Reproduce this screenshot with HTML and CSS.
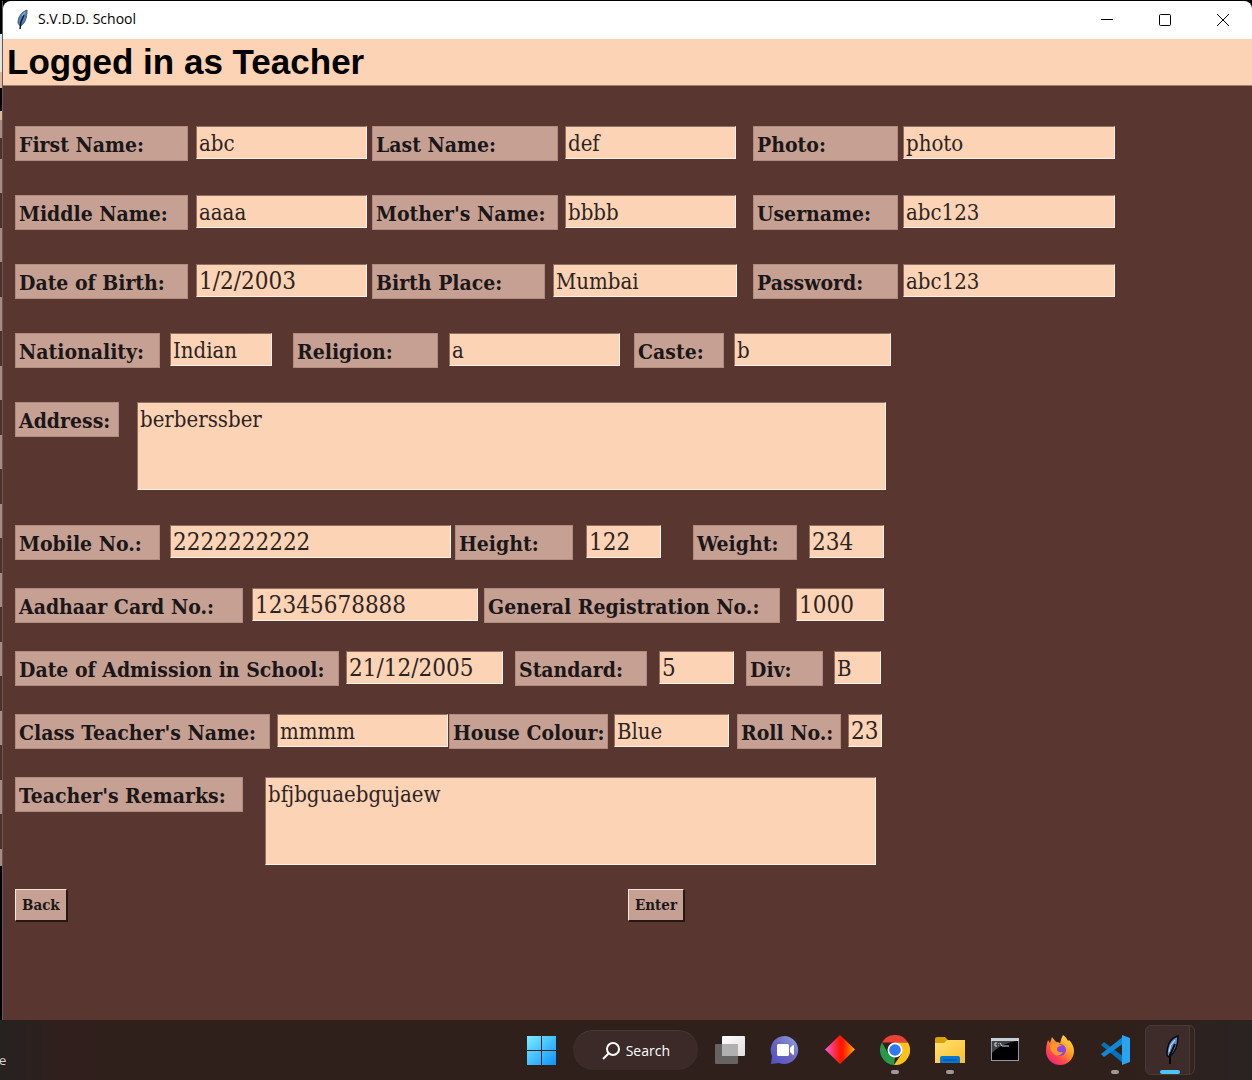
FILE: index.html
```html
<!DOCTYPE html>
<html lang="en">
<head>
<meta charset="utf-8">
<meta name="viewport" content="width=device-width, initial-scale=1">
<title>S.V.D.D. School</title>
<link rel="stylesheet" href="styles.css">
</head>
<body>
<div class="desktop">
  <div class="behind"></div>
  <main class="window">
    <header class="titlebar">
      <svg class="feather" viewBox="0 0 16 22" aria-hidden="true"><path d="M12 1C7 3 3 7 3 14l2 3c5-2 7-8 7-16z" fill="#4d86c4" stroke="#4a545c"/><path d="M9 6 6 13l-1 7" fill="none" stroke="#111820" stroke-width="1.500"/><path d="M10 3 7 7" stroke="#8fc0ea"/></svg>
      <span class="title">S.V.D.D. School</span>
      <button class="control" aria-label="Minimize"><svg viewBox="0 0 14 14"><path d="M1 6.500h12"/></svg></button>
      <button class="control" aria-label="Maximize"><svg viewBox="0 0 14 14"><rect x="1.500" y="1.500" width="11" height="11" rx="1"/></svg></button>
      <button class="control" aria-label="Close"><svg viewBox="0 0 14 14"><path d="m1 1 12 12M13 1 1 13"/></svg></button>
    </header>
    <h1 class="banner">Logged in as Teacher</h1>
    <form class="form">
      <section class="group personal">
        <div class="row names">
          <label for="first">First Name:</label><input id="first" value="abc">
          <label for="last">Last Name:</label><input id="last" value="def">
          <label for="photo">Photo:</label><input id="photo" value="photo">
        </div>
        <div class="row names">
          <label for="middle">Middle Name:</label><input id="middle" value="aaaa">
          <label for="mother">Mother's Name:</label><input id="mother" value="bbbb">
          <label for="user">Username:</label><input id="user" value="abc123">
        </div>
        <div class="row birth">
          <label for="dob">Date of Birth:</label><input id="dob" class="numeric" value="1/2/2003">
          <label for="place">Birth Place:</label><input id="place" value="Mumbai">
          <label for="pass">Password:</label><input id="pass" value="abc123">
        </div>
        <div class="row origin">
          <label for="nation">Nationality:</label><input id="nation" value="Indian">
          <label for="religion">Religion:</label><input id="religion" value="a">
          <label for="caste">Caste:</label><input id="caste" value="b">
        </div>
        <div class="row address">
          <label for="address">Address:</label><textarea id="address">berberssber</textarea>
        </div>
      </section>
      <section class="group school">
        <div class="row body">
          <label for="mobile">Mobile No.:</label><input id="mobile" class="numeric" value="2222222222">
          <label for="height">Height:</label><input id="height" class="numeric" value="122">
          <label for="weight">Weight:</label><input id="weight" class="numeric" value="234">
        </div>
        <div class="row numbers">
          <label for="aadhaar">Aadhaar Card No.:</label><input id="aadhaar" class="numeric" value="12345678888">
          <label for="reg">General Registration No.:</label><input id="reg" class="numeric" value="1000">
        </div>
        <div class="row admission">
          <label for="admitted">Date of Admission in School:</label><input id="admitted" class="numeric" value="21/12/2005">
          <label for="standard">Standard:</label><input id="standard" class="numeric" value="5">
          <label for="div">Div:</label><input id="div" value="B">
        </div>
        <div class="row class">
          <label for="teacher">Class Teacher's Name:</label><input id="teacher" value="mmmm">
          <label for="house">House Colour:</label><input id="house" value="Blue">
          <label for="roll">Roll No.:</label><input id="roll" class="numeric" value="23">
        </div>
        <div class="row remarks">
          <label for="remarks">Teacher's Remarks:</label><textarea id="remarks">bfjbguaebgujaew</textarea>
        </div>
      </section>
      <div class="actions">
        <button type="button" class="action">Back</button>
        <button type="submit" class="action">Enter</button>
      </div>
    </form>
  </main>
</div>
<footer class="taskbar">
  <span class="widget">e</span>
  <nav class="apps" aria-label="Taskbar">
    <button class="app" aria-label="Start"><svg viewBox="0 0 30 30"><defs><linearGradient id="win" x1="0" y1="0" x2="30" y2="30" gradientUnits="userSpaceOnUse"><stop stop-color="#7ff0ff"/><stop offset="1" stop-color="#0b93ff"/></linearGradient></defs><path fill="url(#win)" d="M1 1h14v14H1zM16 1h14v14H16zM1 16h14v14H1zM16 16h14v14H16z"/></svg></button>
    <button class="search"><svg viewBox="0 0 18 18" aria-hidden="true"><circle cx="11" cy="7" r="6"/><path d="m7 11-6 6"/></svg>Search</button>
    <button class="app" aria-label="Task View"><svg viewBox="0 0 30 30"><defs><linearGradient id="tv" x2="1" y2="1"><stop stop-color="#fff"/><stop offset="1" stop-color="#dedede"/></linearGradient></defs><rect x="0" y="9" width="23" height="20" rx="1" fill="#666463"/><rect x="7" y="1" width="23" height="20" rx="1" fill="url(#tv)"/><path d="M7 9h16v12H7z" fill="#b1b0b0"/></svg></button>
    <button class="app" aria-label="Chat"><svg viewBox="0 0 30 30"><defs><linearGradient id="chat" x1="0" y1="1" x2="1" y2="0"><stop stop-color="#4d51ca"/><stop offset=".5" stop-color="#6d66bd"/><stop offset="1" stop-color="#8ba8ea"/></linearGradient></defs><path d="M15 1a14 14 0 1 1-6 27L1 29l1-8A14 14 0 0 1 15 1z" fill="url(#chat)"/><rect x="7" y="9" width="12" height="12" rx="1.500" fill="#fff"/><path d="m20 13 3-3q1 0 1 1v8q0 1-1 1l-3-3z" fill="#fff"/></svg></button>
    <button class="app" aria-label="Diamond"><svg viewBox="0 0 30 30"><defs><linearGradient id="dia"><stop stop-color="#f25bdc"/><stop offset=".5" stop-color="#ff1800"/><stop offset=".6" stop-color="#ff1800"/><stop offset="1" stop-color="#ffb000"/></linearGradient></defs><path d="m15 0 15 14.500L15 29 0 14.500z" fill="url(#dia)"/></svg></button>
    <button class="app running" aria-label="Chrome"><svg viewBox="0 0 30 30"><path d="M2 7.500A15 15 0 0 1 28 7.500H15z" fill="#ea4335"/><path d="M2 7.500 8.500 19 15 22.500 14 30A15 15 0 0 1 2 7.500z" fill="#26994a"/><path d="M28 7.500A15 15 0 0 1 14 30l7.500-11L15 7.500z" fill="#fcc21b"/><circle cx="15" cy="15" r="7.500" fill="#fff"/><circle cx="15" cy="15" r="5.800" fill="#2f78ee"/></svg></button>
    <button class="app running" aria-label="File Explorer"><svg viewBox="0 0 30 30"><defs><linearGradient id="fold" x2="1" y2="1"><stop stop-color="#ffe276"/><stop offset="1" stop-color="#fdbd2a"/></linearGradient></defs><path d="M0 4q0-2 2-2h8l3 3v6H0z" fill="#dca000"/><path d="M0 8h9l3-3h18v23H0z" fill="url(#fold)"/><path d="M5 28v-5q0-2 2-2h16q2 0 2 2v5z" fill="#0877d3"/><path d="M8 25h14" stroke="#044d98"/></svg></button>
    <button class="app" aria-label="Command Prompt"><svg viewBox="0 0 30 30"><rect x="1.500" y="3.500" width="27" height="22" fill="#000" stroke="#8c9baa"/><path d="M1 3h28v3H1z" fill="#c5d0d9"/><path d="M2 6h26C17 7 8 12 2 18z" fill="#444"/><path d="M7 8H5v3h2M8.500 8.500v.6M8.500 10.500v.6M10 8l2 3M12 11h7" fill="none" stroke="#ddd"/></svg></button>
    <button class="app" aria-label="Firefox"><svg viewBox="0 0 30 30"><defs><linearGradient id="fox" x1="1" y1="0" x2=".2" y2="1"><stop stop-color="#fff34f"/><stop offset=".45" stop-color="#ff9a25"/><stop offset=".75" stop-color="#ff4450"/><stop offset="1" stop-color="#e92186"/></linearGradient></defs><path d="M18 0c3 2 4 4 5 6l1-1c4 4 5 8 5 11A14 14 0 0 1 1 16C1 11 2 8 3 5l2 3 2-6 4 5q4 0 4 2 1-6 3-9z" fill="url(#fox)"/><circle cx="15" cy="15" r="6" fill="#8845e7"/><path d="M5 10q6-4 12 1-5 0-5 3 0 4 6 3-3 5-8 3-5-3-5-10z" fill="#ff9522"/></svg></button>
    <button class="app running" aria-label="Visual Studio Code"><svg viewBox="0 0 30 30"><path d="m1 10 3-3 20 15v7z" fill="#0872b8"/><path d="m1 19 3 3L24 8V1z" fill="#1089d2"/><path d="m22 0 8 3v24l-8 3z" fill="#29a4f2"/></svg></button>
    <button class="app active" aria-label="S.V.D.D. School"><svg viewBox="0 0 30 30"><path d="M23 1C16 3 12 9 12 20l2 2c6-4 9-12 9-21z" fill="#5d91ce" stroke="#080c12" stroke-width="1.500"/><path d="M20 9 15 20v9" fill="none" stroke="#05080c" stroke-width="2"/><path d="M20 5q-6 5-6 12" fill="none" stroke="#d6e8f6"/></svg></button>
  </nav>
</footer>
</body>
</html>
```
FILE: styles.css
```css
* { box-sizing: border-box; }

body {
  margin: 0;
  min-height: 100vh;
  display: flex;
  flex-direction: column;
  background: #000;
  font-family: "Open Sans", sans-serif;
}

button { padding: 0; border: 0; background: none; font: inherit; }

.desktop { flex: 1; display: flex; padding-top: 1px; }

/* Sliver of the window that lies underneath */
.behind {
  width: 3px;
  border-right: 1px solid #625a57;
  background:
    linear-gradient(#000 33px, #e4e4e4 33px 71px, #dcb79c 71px 87px, #000 87px 110px, #dcb79c 110px 119px, transparent 119px 865px, #000 865px),
    repeating-linear-gradient(#4c302a 0 21px, #a98980 21px 55px, #4c302a 55px 69px) 0 137px;
}

.window {
  flex: 1;
  min-width: 0;
  display: flex;
  flex-direction: column;
  background: #593730;
  border-radius: 8px 8px 0 0;
  overflow: hidden;
}

.titlebar {
  display: flex;
  align-items: center;
  height: 38px;
  padding-left: 12px;
  background: #fff;
}
.feather { width: 16px; height: 22px; }
.title { flex: 1; margin-left: 7px; font-size: 14px; line-height: 18px; padding-bottom: 2px; color: #000; }
.control { width: 58px; height: 38px; }
.control svg { width: 14px; height: 14px; display: block; margin: auto; fill: none; stroke: #000; }

.banner {
  margin: 0;
  padding: 0 4px;
  border-bottom: 1px solid #a1806f;
  background: #fdd3b5;
  color: #000;
  font: bold 35px/46px "Liberation Sans", sans-serif;
}

.form { padding: 40px 12px; }
.group { display: grid; }
.personal { gap: 34px; margin-bottom: 35px; }
.school { gap: 28px; margin-bottom: 24px; }

/* Controls sit in the odd tracks, the even tracks are spacing */
.row { display: grid; min-height: 35px; align-items: start; }
.row > :nth-child(2) { grid-column: 3; }
.row > :nth-child(3) { grid-column: 5; }
.row > :nth-child(4) { grid-column: 7; }
.row > :nth-child(5) { grid-column: 9; }
.row > :nth-child(6) { grid-column: 11; }

.names { grid-template-columns: 173px 8px 171px 5px 186px 7px 171px 17px 145px 5px 212px; }
.birth { grid-template-columns: 173px 8px 171px 5px 173px 8px 184px 16px 145px 5px 212px; }
.origin { grid-template-columns: 145px 10px 102px 21px 145px 11px 171px 14px 90px 10px 157px; }
.address { grid-template-columns: 104px 18px 749px; }
.body { grid-template-columns: 145px 10px 281px 4px 118px 13px 75px 32px 104px 12px 75px; }
.numbers { grid-template-columns: 228px 9px 226px 6px 296px 16px 88px; }
.admission { grid-template-columns: 324px 7px 157px 12px 132px 12px 75px 12px 77px 11px 47px; }
.class { grid-template-columns: 255px 7px 171px 1px 159px 6px 115px 8px 104px 7px 34px; }
.remarks { grid-template-columns: 228px 22px 611px; }

label {
  height: 35px;
  padding-left: 3px;
  border: 1px solid #b08b80;
  background: #c6a093;
  color: #1b1718;
  font: bold 21px/35px "DejaVu Serif Condensed", "DejaVu Serif", serif;
  white-space: nowrap;
}

input, textarea {
  width: 100%;
  height: 33px;
  margin: 0;
  padding: 1px 2px 0;
  border: 1px solid;
  border-color: #8d7164 #fff3ea #fff3ea #8d7164;
  border-radius: 0;
  outline: 0;
  background: #fdd3b5;
  color: #2b2423;
  font: 22px/32px "DejaVu Serif Condensed", "DejaVu Serif", serif;
}
.numeric { font-size: 24px; }
textarea { display: block; height: 88px; resize: none; }

.actions { display: grid; grid-template-columns: 613px 1fr; justify-items: start; }
.action {
  height: 32px;
  padding: 0 6px;
  border: 1px solid;
  border-color: #ffe3d8 #251815 #251815 #ffe3d8;
  box-shadow: 1px 1px #251815;
  background: #c6a093;
  color: #1b1718;
  font: bold 15px/30px "DejaVu Serif Condensed", "DejaVu Serif", serif;
}

.taskbar {
  display: flex;
  height: 60px;
  background: linear-gradient(90deg, #262220, #301f1d 5%, #30201b 10%, #30201b 90%, #2a2322);
}
.widget { width: 41%; padding-top: 30px; color: #d6d2d0; font-size: 13px; line-height: 20px; text-indent: -1px; }
.apps { display: flex; align-items: center; }
.app { position: relative; width: 55px; height: 50px; }
.app svg { display: block; width: 30px; height: 30px; margin: auto; }
.search {
  display: flex;
  align-items: center;
  justify-content: center;
  gap: 6px;
  width: 125px;
  height: 40px;
  margin: 0 4px 0 5px;
  border-top: 1px solid #493936;
  border-radius: 20px;
  background: #3b2a28;
  color: #fff;
  font-size: 14px;
}
.search svg { width: 18px; height: 18px; fill: none; stroke: #fff; stroke-width: 2; }
.running::after, .active::after {
  content: "";
  position: absolute;
  left: 24px;
  bottom: 1px;
  width: 8px;
  height: 4px;
  border-radius: 2px;
  background: #a19997;
}
.active::after { left: 14px; bottom: 0; width: 20px; background: #4cc2ff; }
.active {
  width: 50px;
  margin-left: 3px;
  border: 1px solid #4a3a37;
  border-radius: 6px;
  background: linear-gradient(90deg, #3d2c29 43px, #4a3a37 43px 44px, #34231f 44px);
}
.active svg { margin-left: 9px; }
```
